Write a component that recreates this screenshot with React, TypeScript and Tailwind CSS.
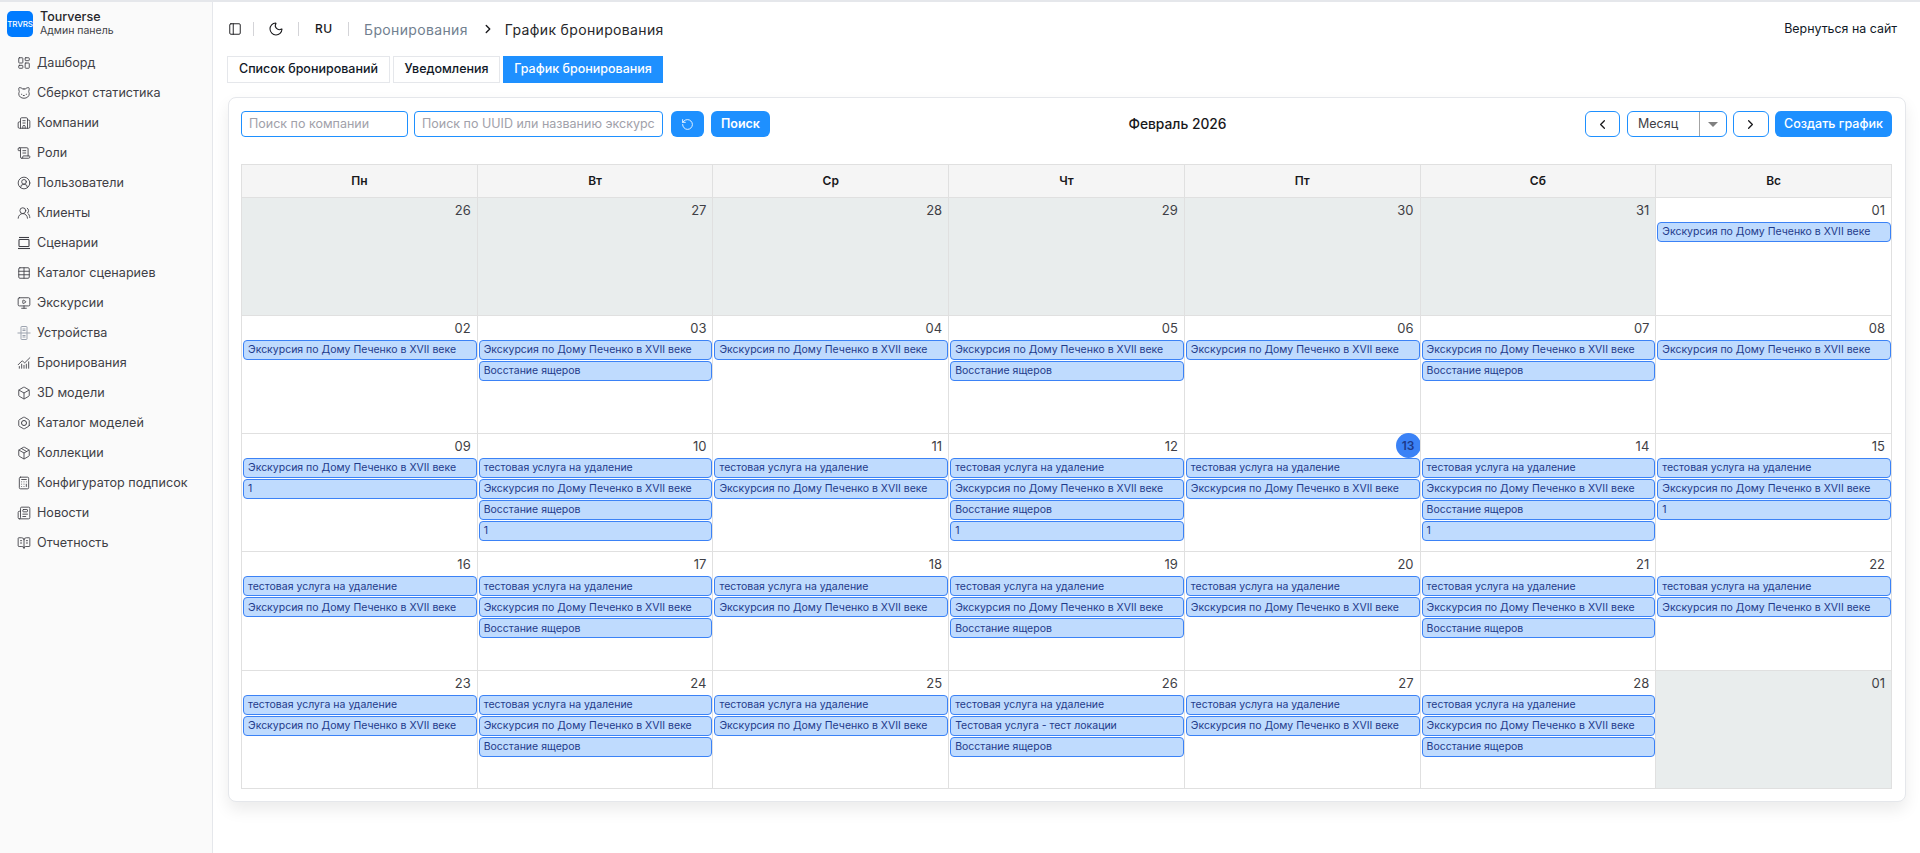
import {
  BookOpenText,
  Box,
  Building2,
  Calculator,
  Cat,
  ChartNoAxesCombined,
  ChevronLeft,
  ChevronRight,
  CircleUserRound,
  Hexagon,
  LayoutDashboard,
  MonitorPlay,
  Moon,
  Newspaper,
  Package,
  PanelLeft,
  RotateCcw,
  ScrollText,
  Table,
  UsersRound,
} from "lucide-react";

function ScenarioIcon() {
  return (
    <svg width="14" height="14" viewBox="0 0 14 14" fill="none" stroke="currentColor" strokeWidth="1.1">
      <path d="M2 1.5h10" />
      <rect x="2" y="3.5" width="10" height="7" rx="0.8" />
      <path d="M1 12.5h12" />
    </svg>
  );
}

function DeviceIcon() {
  return (
    <svg width="14" height="14" viewBox="0 0 14 14" fill="none" stroke="#9ca3af" strokeWidth="1">
      <rect x="4" y="0.5" width="6" height="13" rx="0.6" />
      <path d="M0.5 7h13M5.5 3h3M5.5 11h3M5.5 9.5h3M5.5 4.5h3" />
    </svg>
  );
}

function ModelCatalogIcon() {
  return (
    <span className="relative flex h-[14px] w-[14px] items-center justify-center">
      <Hexagon size={14} strokeWidth={1.5} />
      <span className="absolute h-[6px] w-[6px] rounded-full border border-[#3f3f46]" />
    </span>
  );
}

const navItems = [
  { label: "Дашборд", icon: <LayoutDashboard size={14} strokeWidth={1.5} /> },
  { label: "Сберкот статистика", icon: <Cat size={14} strokeWidth={1.5} /> },
  { label: "Компании", icon: <Building2 size={14} strokeWidth={1.5} /> },
  { label: "Роли", icon: <ScrollText size={14} strokeWidth={1.5} /> },
  { label: "Пользователи", icon: <CircleUserRound size={14} strokeWidth={1.5} /> },
  { label: "Клиенты", icon: <UsersRound size={14} strokeWidth={1.5} /> },
  { label: "Сценарии", icon: <ScenarioIcon /> },
  { label: "Каталог сценариев", icon: <Table size={14} strokeWidth={1.5} /> },
  { label: "Экскурсии", icon: <MonitorPlay size={14} strokeWidth={1.5} /> },
  { label: "Устройства", icon: <DeviceIcon /> },
  { label: "Бронирования", icon: <ChartNoAxesCombined size={14} strokeWidth={1.5} /> },
  { label: "3D модели", icon: <Box size={14} strokeWidth={1.5} /> },
  { label: "Каталог моделей", icon: <ModelCatalogIcon /> },
  { label: "Коллекции", icon: <Package size={14} strokeWidth={1.5} /> },
  { label: "Конфигуратор подписок", icon: <Calculator size={14} strokeWidth={1.5} /> },
  { label: "Новости", icon: <Newspaper size={14} strokeWidth={1.5} /> },
  { label: "Отчетность", icon: <BookOpenText size={14} strokeWidth={1.5} /> },
];

const E = "Экскурсия по Дому Печенко в XVII веке";
const V = "Восстание ящеров";
const T = "тестовая услуга на удаление";
const L = "Тестовая услуга - тест локации";

type Day = { day: string; events?: string[]; other?: boolean; today?: boolean };

const days: Day[] = [
  { day: "26", other: true },
  { day: "27", other: true },
  { day: "28", other: true },
  { day: "29", other: true },
  { day: "30", other: true },
  { day: "31", other: true },
  { day: "01", events: [E] },
  { day: "02", events: [E] },
  { day: "03", events: [E, V] },
  { day: "04", events: [E] },
  { day: "05", events: [E, V] },
  { day: "06", events: [E] },
  { day: "07", events: [E, V] },
  { day: "08", events: [E] },
  { day: "09", events: [E, "1"] },
  { day: "10", events: [T, E, V, "1"] },
  { day: "11", events: [T, E] },
  { day: "12", events: [T, E, V, "1"] },
  { day: "13", events: [T, E], today: true },
  { day: "14", events: [T, E, V, "1"] },
  { day: "15", events: [T, E, "1"] },
  { day: "16", events: [T, E] },
  { day: "17", events: [T, E, V] },
  { day: "18", events: [T, E] },
  { day: "19", events: [T, E, V] },
  { day: "20", events: [T, E] },
  { day: "21", events: [T, E, V] },
  { day: "22", events: [T, E] },
  { day: "23", events: [T, E] },
  { day: "24", events: [T, E, V] },
  { day: "25", events: [T, E] },
  { day: "26", events: [T, L, V] },
  { day: "27", events: [T, E] },
  { day: "28", events: [T, E, V] },
  { day: "01", other: true },
];

const weekDays = ["Пн", "Вт", "Ср", "Чт", "Пт", "Сб", "Вс"];

function Sidebar() {
  return (
    <aside className="flex w-[213px] shrink-0 flex-col border-r border-[#e5e7eb] bg-[#fafafa] pl-[7px] pt-[8px]">
      <div className="flex items-center gap-[7px]">
        <div className="flex h-[26px] w-[26px] items-center justify-center overflow-hidden rounded-[5px] bg-[#007bff] text-[8px] font-medium tracking-tight text-white">
          TRVRS
        </div>
        <div className="flex flex-col">
          <span className="text-[12.5px] font-medium leading-[14px] text-[#27272a]">Tourverse</span>
          <span className="text-[10.5px] leading-[13px] text-[#3f3f46]">Админ панель</span>
        </div>
      </div>
      <nav className="mt-[11px] flex flex-col pl-[10px]">
        {navItems.map((item) => (
          <div key={item.label} className="flex h-[30px] items-center gap-[6px] text-[12.6px] text-[#3f3f46]">
            <span className="flex w-[14px] justify-center text-[#3f3f46]">{item.icon}</span>
            <span>{item.label}</span>
          </div>
        ))}
      </nav>
    </aside>
  );
}

function Header() {
  return (
    <header className="flex h-[54px] items-center justify-between pl-[1px] pr-[9px] text-[14px] tracking-[0.025em]">
      <div className="flex items-center">
        <PanelLeft size={14} strokeWidth={1.6} className="text-[#18181b]" />
        <span className="ml-[11px] h-[14px] w-px bg-[#d4d4d8]" />
        <Moon size={16} strokeWidth={1.6} className="ml-[14px] text-[#18181b]" />
        <span className="ml-[14px] h-[14px] w-px bg-[#d4d4d8]" />
        <span className="ml-[16px] w-[17px] text-[12px] font-medium text-[#18181b]">RU</span>
        <span className="ml-[16px] h-[14px] w-px bg-[#d4d4d8]" />
        <span className="ml-[15px] text-[#71808f]">Бронирования</span>
        <ChevronRight size={14} strokeWidth={2.4} className="ml-[13px] text-[#18181b]" />
        <span className="ml-[10px] text-[#27272a]">График бронирования</span>
      </div>
      <span className="text-[12.4px] tracking-normal text-[#111827]">Вернуться на сайт</span>
    </header>
  );
}

function Tabs() {
  return (
    <div className="flex h-[27px] items-stretch gap-[3px] text-[12.5px] font-medium">
      <div className="flex w-[163px] items-center justify-center border border-[#e5e7eb] text-[#111827]">Список бронирований</div>
      <div className="flex w-[107px] items-center justify-center border border-[#e5e7eb] text-[#111827]">Уведомления</div>
      <div className="flex w-[160px] items-center justify-center bg-[#1e90ff] text-white">График бронирования</div>
    </div>
  );
}

function Toolbar() {
  return (
    <div className="flex h-[26px] items-stretch justify-between">
      <div className="flex items-stretch">
        <input
          readOnly
          placeholder="Поиск по компании"
          className="w-[167px] rounded-[4px] border border-[#1e90ff] px-[7px] text-[12.5px] outline-none placeholder:text-[#a1a1aa]"
        />
        <input
          readOnly
          placeholder="Поиск по UUID или названию экскурсии"
          className="ml-[6px] w-[249px] rounded-[4px] border border-[#1e90ff] px-[7px] text-[12.5px] outline-none placeholder:text-[#a1a1aa]"
        />
        <button className="ml-[8px] flex w-[33px] items-center justify-center rounded-[6px] bg-[#1e90ff] text-white">
          <RotateCcw size={13} strokeWidth={1.6} />
        </button>
        <button className="ml-[7px] w-[59px] rounded-[6px] bg-[#1e90ff] text-[12.5px] font-semibold text-white">Поиск</button>
      </div>
      <div className="flex items-center text-[13.8px] font-medium text-[#18181b]">Февраль 2026</div>
      <div className="flex items-stretch">
        <button className="flex w-[35px] items-center justify-center rounded-[6px] border border-[#1e90ff] text-[#18181b]">
          <ChevronLeft size={15} strokeWidth={2} />
        </button>
        <div className="ml-[7px] flex w-[100px] items-stretch rounded-[6px] border border-[#1e90ff] text-[12.5px] text-[#3f3f46]">
          <span className="flex w-[71px] items-center pl-[10px]">Месяц</span>
          <span className="flex flex-1 items-center justify-center border-l border-[#a3a3a3]">
            <span className="h-0 w-0 border-x-[5px] border-t-[5px] border-x-transparent border-t-[#808080]" />
          </span>
        </div>
        <button className="ml-[6px] flex w-[36px] items-center justify-center rounded-[6px] border border-[#1e90ff] text-[#18181b]">
          <ChevronRight size={15} strokeWidth={2} />
        </button>
        <button className="ml-[6px] w-[117px] rounded-[6px] bg-[#1e90ff] text-[12.5px] font-medium text-white">Создать график</button>
      </div>
    </div>
  );
}

function EventChip({ title }: { title: string }) {
  return (
    <div className="ml-[1px] flex h-[20px] items-center truncate rounded-[4px] border border-[#3b82f6] bg-[#bfdbfe] px-[4px] text-[10.5px] text-[#1e3a8a]">
      {title}
    </div>
  );
}

function DayCell({ item }: { item: Day }) {
  return (
    <div className={`relative h-[118.3px] border-l border-t border-[#e0e0e0] ${item.other ? "bg-[#e9eded]" : "bg-white"}`}>
      {item.today ? (
        <div className="absolute right-[-1px] top-[-1px] flex h-[25px] w-[25px] items-center justify-center rounded-full bg-[#3b82f6] text-[12px] font-semibold text-[#1e3a8a]">
          {item.day}
        </div>
      ) : (
        <div className="absolute right-[6px] top-[3px] text-[13px] leading-[18px] text-[#3f3f46]">{item.day}</div>
      )}
      {item.events && (
        <div className="flex flex-col gap-px pt-[24px]">
          {item.events.map((title, i) => (
            <EventChip key={i} title={title} />
          ))}
        </div>
      )}
    </div>
  );
}

function Calendar() {
  return (
    <div className="mt-[27px] border-b border-r border-[#e0e0e0]">
      <div className="grid grid-cols-7">
        {weekDays.map((d) => (
          <div key={d} className="flex h-[32.6px] items-center justify-center border-l border-t border-[#e0e0e0] bg-[#f5f5f5] text-[12px] font-semibold text-[#18181b]">
            {d}
          </div>
        ))}
        {days.map((item, i) => (
          <DayCell key={i} item={item} />
        ))}
      </div>
    </div>
  );
}

export default function App() {
  return (
    <div className="flex h-[853px] w-[1920px] overflow-hidden border-t-2 border-[#e5e7eb] bg-white font-['Inter',sans-serif]">
      <Sidebar />
      <main className="flex-1 pl-[14px] pr-[14px]">
        <Header />
        <Tabs />
        <section className="ml-[1px] mt-[14px] h-[705px] rounded-[8px] border border-[#e5e7eb] bg-white pl-[12px] pr-[13px] pt-[13px] shadow-[0_8px_16px_rgba(0,0,0,0.08)]">
          <Toolbar />
          <Calendar />
        </section>
      </main>
    </div>
  );
}
